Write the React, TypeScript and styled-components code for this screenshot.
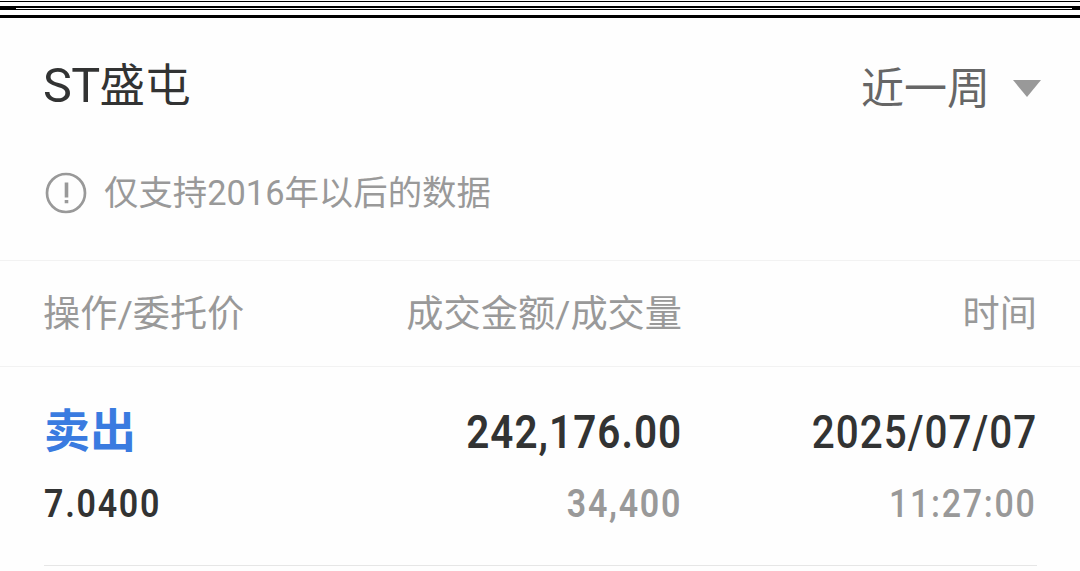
import styled, { createGlobalStyle } from 'styled-components'

const fontStack = `Roboto, 'Noto Sans CJK SC', sans-serif`

const colors = {
  text: '#323333',
  regular: '#666666',
  shy: '#999999',
  sell: '#3a7be0',
  line: '#f2f2f2',
  rowLine: '#e6e6e6',
}

const GlobalStyle = createGlobalStyle`
  * {
    box-sizing: border-box;
  }

  body {
    margin: 0;
    background: #fefefe;
    overflow: hidden;
  }
`

const Page = styled.main`
  display: flex;
  flex-direction: column;
  width: 1080px;
  height: 571px;
  background: #fefefe;
  font-family: ${fontStack};
  white-space: nowrap;
`

const TopEdge = styled.svg`
  display: block;
  flex-shrink: 0;
`

const TitleBar = styled.header`
  display: flex;
  align-items: center;
  justify-content: space-between;
  height: 136px;
  padding: 0 39px 0 43px;
`

const StockName = styled.h1`
  margin: 0;
  color: ${colors.text};
  font-size: 45.5px;
  font-weight: 400;
  line-height: 60px;
`

const Prefix = styled.span`
  font-size: 48.5px;
  letter-spacing: -0.6px;
`

const PeriodButton = styled.button`
  display: flex;
  align-items: center;
  gap: 23px;
  padding: 5px 0 0;
  border: 0;
  background: none;
  color: ${colors.regular};
  font-family: inherit;
  font-size: 43px;
  line-height: 60px;
`

const Notice = styled.p`
  display: flex;
  align-items: center;
  gap: 17px;
  height: 78px;
  margin: 0 0 28px;
  padding: 0 45px;
  color: ${colors.shy};
  font-size: 34.4px;
  line-height: 42px;
`

const Columns = styled.div`
  display: grid;
  grid-template-columns: 300px 338px 1fr;
`

const TableHead = styled(Columns)`
  grid-template-columns: 301px 338px 1fr;
  align-items: center;
  height: 107px;
  padding: 0 43px;
  border-top: 1px solid ${colors.line};
  border-bottom: 1px solid ${colors.line};
  color: ${colors.shy};
  font-size: 37.2px;
  line-height: 50px;
`

const HeadCell = styled.span<{ $end?: boolean }>`
  text-align: ${({ $end }) => ($end ? 'right' : 'left')};
`

const Record = styled(Columns)`
  height: 199px;
  margin: 0 43px 0 44px;
  padding-top: 35px;
  border-bottom: 1px solid ${colors.rowLine};
`

const Cell = styled.div<{ $end?: boolean }>`
  display: flex;
  flex-direction: column;
  align-items: ${({ $end }) => ($end ? 'flex-end' : 'flex-start')};
`

const Action = styled.span`
  height: 66px;
  color: ${colors.sell};
  font-size: 46px;
  font-weight: 700;
  line-height: 58px;
`

const Figure = styled.span<{
  $large?: boolean
  $weight: number
  $color: string
  $origin?: string
}>`
  height: ${({ $large }) => ($large ? 66 : 72)}px;
  color: ${({ $color }) => $color};
  font-size: ${({ $large }) => ($large ? 47 : 39.5)}px;
  font-weight: ${({ $weight }) => $weight};
  line-height: ${({ $large }) => ($large ? 60 : 72)}px;
  letter-spacing: ${({ $large }) => ($large ? 1.2 : 2)}px;
  transform: scaleX(0.86);
  transform-origin: ${({ $origin }) => $origin ?? 'right'} center;
`

const EdgeLines = () => (
  <TopEdge width="1080" height="18" shapeRendering="crispEdges">
    <rect width="1080" height="18" fill="#fff" />
    <rect y="1" width="1080" height="1" />
    <rect y="6" width="1080" height="4" />
    <rect x="16" y="8" width="1056" height="1" fill="#fff" />
    <rect y="15" width="1080" height="3" />
  </TopEdge>
)

const CaretIcon = () => (
  <svg width="28" height="17" viewBox="0 0 28 17">
    <path d="M0 0h28L14 17z" fill="#999" />
  </svg>
)

const WarningIcon = () => (
  <svg width="42" height="42" viewBox="0 0 42 42" fill="none">
    <circle cx="21" cy="21" r="19" stroke="#999" strokeWidth="2.7" />
    <path d="M21.5 10.5v15M21.5 28v3.2" stroke="#999" strokeWidth="3.6" />
  </svg>
)

const App = () => (
  <>
    <GlobalStyle />
    <Page>
      <EdgeLines />
      <TitleBar>
        <StockName>
          <Prefix>ST</Prefix>盛屯
        </StockName>
        <PeriodButton>
          近一周
          <CaretIcon />
        </PeriodButton>
      </TitleBar>
      <Notice>
        <WarningIcon />
        仅支持2016年以后的数据
      </Notice>
      <TableHead>
        <HeadCell>操作/委托价</HeadCell>
        <HeadCell $end>成交金额/成交量</HeadCell>
        <HeadCell $end>时间</HeadCell>
      </TableHead>
      <Record>
        <Cell>
          <Action>卖出</Action>
          <Figure $weight={600} $color={colors.text} $origin="left">
            7.0400
          </Figure>
        </Cell>
        <Cell $end>
          <Figure $large $weight={600} $color={colors.text}>
            242,176.00
          </Figure>
          <Figure $weight={600} $color={colors.shy}>
            34,400
          </Figure>
        </Cell>
        <Cell $end>
          <Figure $large $weight={500} $color={colors.text}>
            2025/07/07
          </Figure>
          <Figure $weight={500} $color={colors.shy}>
            11:27:00
          </Figure>
        </Cell>
      </Record>
    </Page>
  </>
)

export default App
